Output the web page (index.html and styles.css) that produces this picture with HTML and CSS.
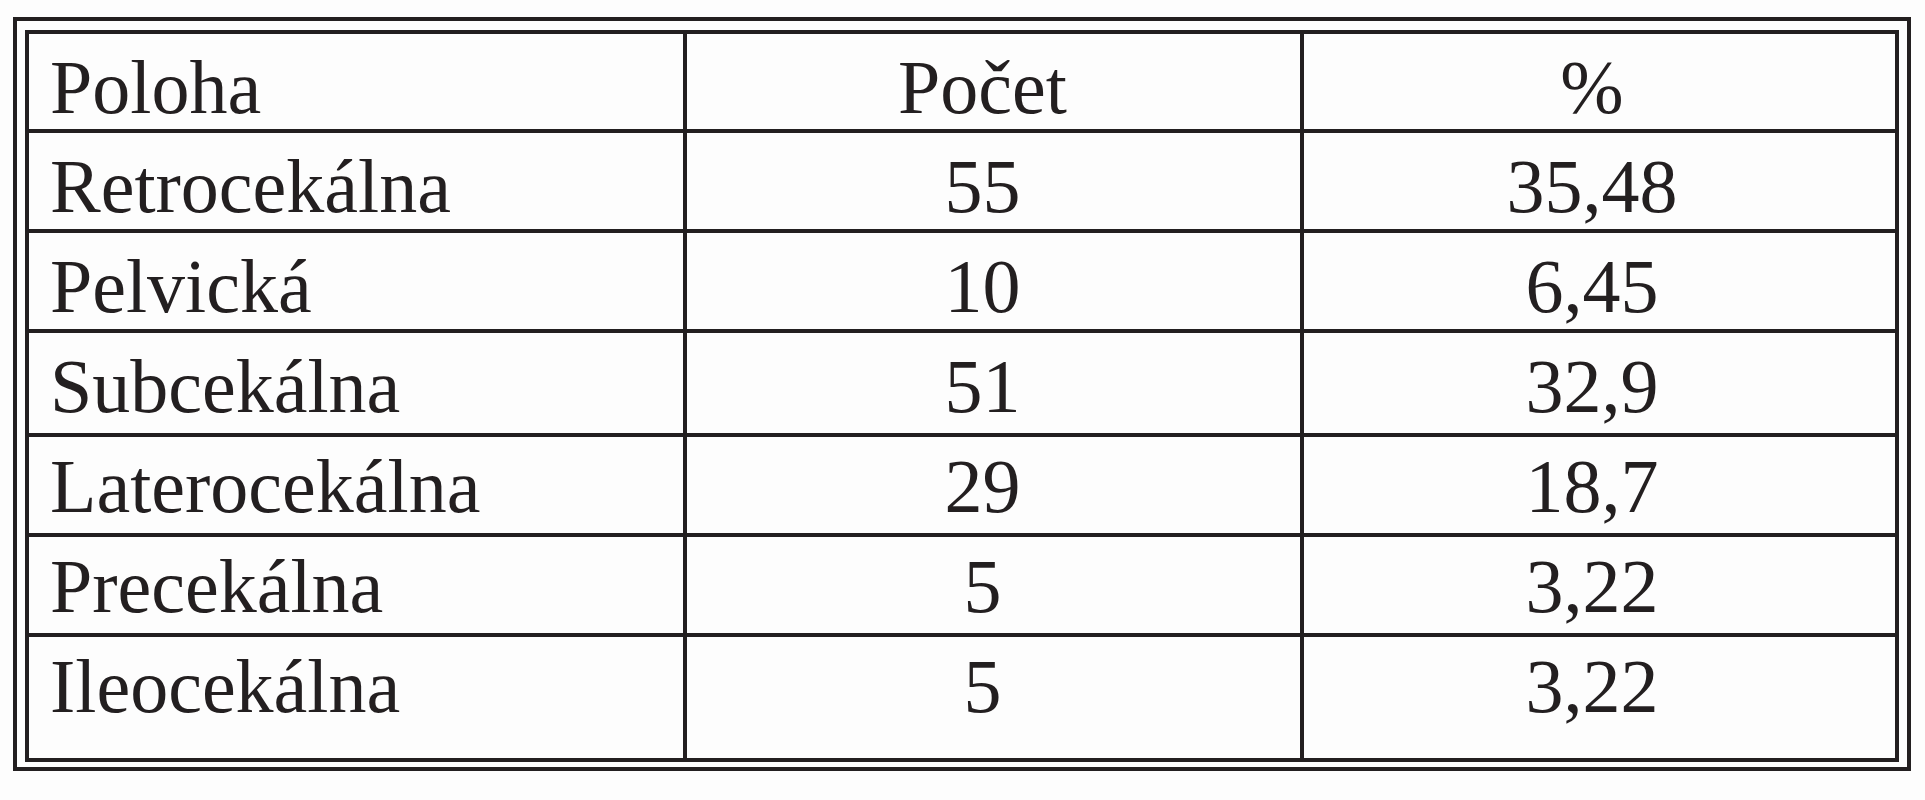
FILE: index.html
```html
<!DOCTYPE html>
<html lang="sk">
<head>
<meta charset="utf-8">
<title>Poloha</title>
<link rel="stylesheet" href="styles.css">
</head>
<body>
<div class="frame">
  <div class="grid">
    <div class="cell c1">Poloha</div>
    <div class="cell c2">Počet</div>
    <div class="cell c3">%</div>

    <div class="cell c1">Retrocekálna</div>
    <div class="cell c2">55</div>
    <div class="cell c3">35,48</div>

    <div class="cell c1">Pelvická</div>
    <div class="cell c2">10</div>
    <div class="cell c3">6,45</div>

    <div class="cell c1">Subcekálna</div>
    <div class="cell c2">51</div>
    <div class="cell c3">32,9</div>

    <div class="cell c1 low">Laterocekálna</div>
    <div class="cell c2 low">29</div>
    <div class="cell c3 low">18,7</div>

    <div class="cell c1 low">Precekálna</div>
    <div class="cell c2 low">5</div>
    <div class="cell c3 low">3,22</div>

    <div class="cell c1 low">Ileocekálna</div>
    <div class="cell c2 low">5</div>
    <div class="cell c3 low">3,22</div>
  </div>
</div>
</body>
</html>
```
FILE: styles.css
```css
html, body {
  margin: 0;
  padding: 0;
  background: #fdfdfd;
}

.frame {
  box-sizing: border-box;
  width: 1898px;
  margin: 17px 0 0 13px;
  border: 4px solid #231f20;
  padding: 9px 8px 5px 8px;
}

.grid {
  display: grid;
  grid-template-columns: 654px 613px 591px;
  grid-template-rows: 95px 96px 96px 100px 96px 96px 121px;
  gap: 4px;
  padding: 4px;
  width: 1874px;
  box-sizing: border-box;
  background: #231f20;
}

.cell {
  background: #fdfdfd;
  font-family: "Liberation Serif", "Times New Roman", serif;
  font-size: 76px;
  line-height: 74px;
  color: #231f20;
  padding-top: 16px;
  white-space: nowrap;
}

.cell.low {
  padding-top: 12px;
}

.c1 {
  padding-left: 21px;
  text-align: left;
}

.c2 {
  text-align: center;
  padding-right: 22px;
}

.c3 {
  text-align: center;
  padding-right: 15px;
}
```
